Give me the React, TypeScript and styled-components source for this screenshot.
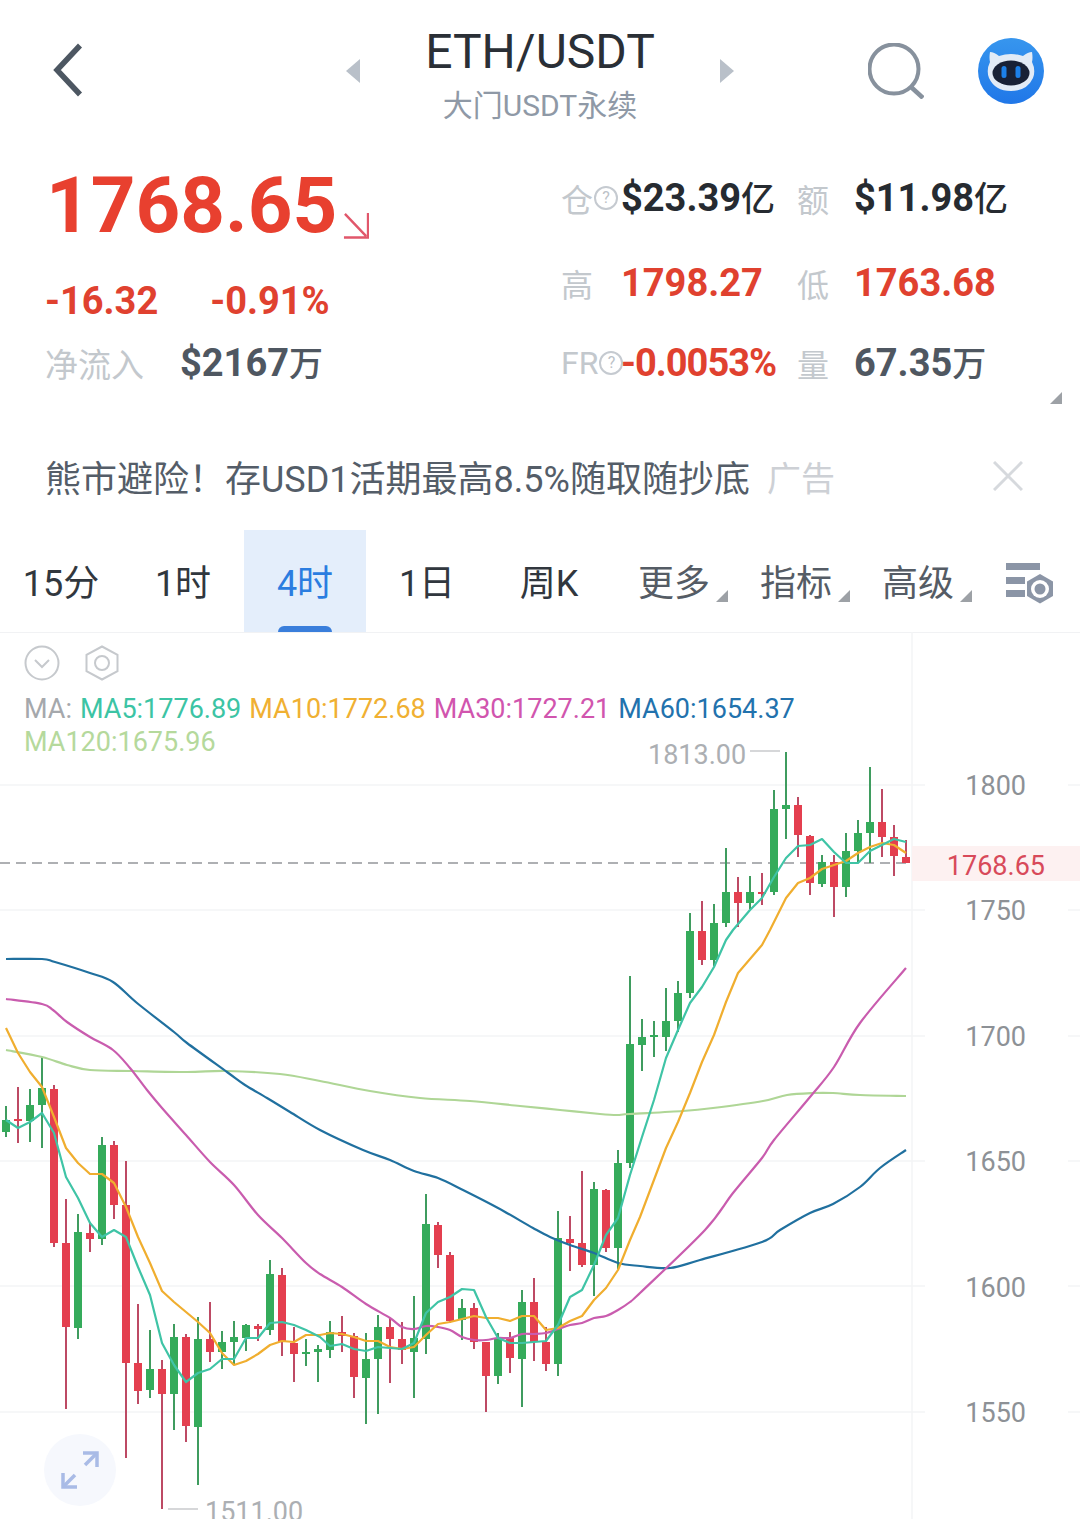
import React from 'react'
import styled, {createGlobalStyle} from 'styled-components'

const FONT = `Roboto, "Noto Sans CJK SC", "Noto Sans", sans-serif`

const GlobalStyle = createGlobalStyle`
  html, body {
    margin: 0;
    padding: 0;
    background: #fff;
  }
  body {
    width: 1080px;
    height: 1519px;
    overflow: hidden;
    font-family: ${FONT};
  }
`

const Page = styled.div`
  width: 1080px;
  height: 1519px;
  display: flex;
  flex-direction: column;
  background: #fff;
  overflow: hidden;
`

/* top bar */
const TopBar = styled.header`
  height: 142px;
  flex: none;
  display: flex;
  align-items: center;
`
const BackSlot = styled.div`
  width: 345px;
  padding-left: 52px;
  box-sizing: border-box;
  display: flex;
  align-items: center;
`
const TitleBox = styled.div`
  width: 360px;
  padding-top: 8px;
  text-align: center;
`
const Title = styled.div`
  font-size: 48px;
  line-height: 56px;
  color: #2a2f36;
`
const SubTitle = styled.div`
  font-size: 30px;
  line-height: 42px;
  color: #8f99a6;
  margin-top: 5px;
`
const SearchSlot = styled.div`
  margin-left: 133px;
  display: flex;
`
const AvatarSlot = styled.div`
  margin-left: 54px;
  display: flex;
`

/* quote */
const Quote = styled.section`
  height: 270px;
  flex: none;
  display: flex;
  position: relative;
`
const QuoteLeft = styled.div`
  width: 561px;
  flex: none;
  padding: 19px 0 0 45px;
  box-sizing: border-box;
`
const PriceRow = styled.div`
  display: flex;
  align-items: flex-start;
  height: 90px;
`
const Price = styled.div`
  font-size: 78px;
  line-height: 90px;
  font-weight: 700;
  color: #e8402f;
  margin-left: 1px;
`
const PriceArrow = styled.svg`
  margin: 51px 0 0 6px;
`
const ChangeRow = styled.div`
  display: flex;
  gap: 52px;
  margin-top: 25px;
  font-size: 38px;
  line-height: 50px;
  font-weight: 700;
  color: #e0412f;
`
const InflowRow = styled.div`
  display: flex;
  align-items: center;
  margin-top: 12px;
  height: 50px;
`
const InflowLabel = styled.span`
  width: 135px;
  font-size: 33px;
  color: #c3c8cd;
`
const QuoteGrid = styled.div`
  display: grid;
  grid-template-columns: 60px 176px 57px auto;
  grid-template-rows: 84px 86px 74px;
  align-items: center;
  padding-top: 14px;
`
const StatLabel = styled.div`
  display: flex;
  align-items: center;
  font-size: 32px;
  color: #c3c8cd;
  white-space: nowrap;
`
const HintMark = styled.span`
  width: 24px;
  height: 24px;
  flex: none;
  margin-left: 1px;
  border: 2px solid #c5cad0;
  border-radius: 50%;
  box-sizing: border-box;
  display: flex;
  align-items: center;
  justify-content: center;
  font-size: 16px;
  line-height: 1;
  color: #bcc2c8;
`
const StatValue = styled.div<{$tone: 'dark' | 'red' | 'slate', $tight?: boolean}>`
  font-size: 38px;
  line-height: 46px;
  font-weight: 700;
  white-space: nowrap;
  letter-spacing: ${p => (p.$tight ? '-1px' : '0')};
  color: ${p => (p.$tone === 'red' ? '#e0412f' : p.$tone === 'slate' ? '#4f5761' : '#262b31')};
`
const Unit = styled.span`
  font-size: 34px;
  font-weight: 500;
`
const CornerMark = styled.i<{$size: number}>`
  display: block;
  width: ${p => p.$size}px;
  height: ${p => p.$size}px;
  background: #9da1a6;
  clip-path: polygon(100% 0, 100% 100%, 0 100%);
`
const QuoteCorner = styled.div`
  position: absolute;
  right: 18px;
  bottom: 8px;
`

/* ad */
const AdBanner = styled.div`
  height: 118px;
  flex: none;
  box-sizing: border-box;
  padding: 10px 57px 0 45px;
  display: flex;
  align-items: center;
  font-size: 36px;
  color: #545d68;
`
const AdTag = styled.span`
  margin-left: 17px;
  font-size: 34px;
  color: #cdd0d5;
`
const AdClose = styled.svg`
  margin-left: auto;
`

/* tabs */
const Tabs = styled.nav`
  height: 102px;
  flex: none;
  display: flex;
`
const Tab = styled.div<{$active?: boolean}>`
  width: 122px;
  flex: none;
  position: relative;
  display: flex;
  align-items: center;
  justify-content: center;
  padding-bottom: 3px;
  box-sizing: border-box;
  font-size: 36px;
  color: ${p => (p.$active ? '#2b7de0' : '#31373e')};
  background: ${p => (p.$active ? '#e4eefb' : 'transparent')};
`
const TabBar = styled.i`
  position: absolute;
  left: 34px;
  bottom: 0;
  width: 54px;
  height: 6px;
  border-radius: 6px 6px 0 0;
  background: #3a7edb;
`
const MenuTab = styled.div`
  width: 122px;
  flex: none;
  box-sizing: border-box;
  padding: 0 0 3px 28px;
  display: flex;
  align-items: center;
  gap: 6px;
  font-size: 36px;
  color: #555c65;
`
const MenuCorner = styled.span`
  align-self: flex-end;
  margin-bottom: 27px;
`
const SettingSlot = styled.div`
  margin-left: 29px;
  padding-top: 32px;
`

/* chart */
const ChartPanel = styled.section`
  position: relative;
  flex: 1;
  overflow: hidden;
  box-shadow: inset 0 1px 0 #f1f2f4;
`
const ChartSvg = styled.svg`
  position: absolute;
  left: 0;
  top: 0;
`
const ChartHead = styled.div`
  position: relative;
  padding: 13px 0 0 24px;
`
const ChartTools = styled.div`
  display: flex;
  gap: 24px;
  height: 36px;
`
const Legend = styled.div`
  width: 860px;
  margin-top: 12px;
  font-size: 27px;
  line-height: 33px;
  color: #a5a8ac;
`
const LegendItem = styled.span<{$color: string}>`
  color: ${p => p.$color};
  margin-left: 8px;
`
const LegendWrap = styled.span<{$color: string}>`
  display: block;
  color: ${p => p.$color};
`
const ExpandButton = styled.div`
  position: absolute;
  left: 44px;
  bottom: 13px;
  width: 72px;
  height: 72px;
  border-radius: 50%;
  background: #f6f8fd;
  display: flex;
  align-items: center;
  justify-content: center;
`
const GridLine = styled.line`
  stroke: #f3f4f6;
  stroke-width: 1.5;
`
const AxisText = styled.text`
  font-family: ${FONT};
  font-size: 27px;
  fill: #8d9196;
  text-anchor: end;
`
const NowText = styled(AxisText)`
  fill: #d84a5a;
`
const MarkText = styled.text`
  font-family: ${FONT};
  font-size: 27px;
  fill: #acafb3;
`
const MarkLine = styled.line`
  stroke: #c8cacd;
  stroke-width: 1.5;
`
const NowBand = styled.rect`
  fill: #fdf1f1;
`
const NowLine = styled.line`
  stroke: #aeb0b3;
  stroke-width: 2;
  stroke-dasharray: 10 6;
`
const Wick = styled.line<{$up: boolean}>`
  stroke: ${p => (p.$up ? '#3f9c5f' : '#bd4a64')};
  stroke-width: 2;
`
const Body = styled.rect<{$up: boolean}>`
  fill: ${p => (p.$up ? '#35ab5b' : '#e43f4f')};
`
const MaLine = styled.path<{$color: string}>`
  fill: none;
  stroke: ${p => p.$color};
  stroke-width: 2.2;
  stroke-linejoin: round;
`

// g/r, wick top, wick bottom, body top, body bottom. one candle every 12px from x=6
type Candle = ['g' | 'r', number, number, number, number]
const candles: Candle[] = [
  ['g', 1106, 1137, 1120, 1132], ['r', 1087, 1143, 1119, 1121], ['g', 1089, 1142, 1105, 1121],
  ['g', 1057, 1148, 1088, 1105], ['r', 1085, 1247, 1089, 1243], ['r', 1199, 1409, 1243, 1327],
  ['g', 1214, 1339, 1232, 1328], ['r', 1222, 1252, 1233, 1239], ['g', 1137, 1245, 1145, 1239],
  ['r', 1141, 1219, 1145, 1205], ['r', 1161, 1458, 1205, 1363], ['r', 1304, 1404, 1363, 1391],
  ['g', 1330, 1398, 1369, 1390], ['r', 1360, 1509, 1369, 1394], ['g', 1324, 1430, 1337, 1394],
  ['r', 1334, 1442, 1337, 1426], ['g', 1317, 1485, 1339, 1427], ['r', 1302, 1362, 1339, 1352],
  ['g', 1331, 1369, 1342, 1352], ['g', 1321, 1365, 1337, 1342], ['g', 1324, 1351, 1325, 1338],
  ['r', 1324, 1341, 1326, 1329], ['g', 1260, 1335, 1274, 1330], ['r', 1268, 1356, 1275, 1342],
  ['r', 1327, 1382, 1343, 1354], ['g', 1339, 1366, 1352, 1354], ['g', 1345, 1382, 1349, 1352],
  ['g', 1321, 1358, 1332, 1350], ['r', 1316, 1352, 1332, 1336], ['r', 1333, 1398, 1336, 1377],
  ['g', 1333, 1424, 1359, 1378], ['g', 1315, 1414, 1327, 1359], ['r', 1318, 1383, 1327, 1339],
  ['r', 1322, 1364, 1339, 1350], ['g', 1296, 1398, 1338, 1352], ['g', 1194, 1354, 1224, 1339],
  ['r', 1222, 1268, 1225, 1255], ['r', 1252, 1323, 1255, 1321], ['g', 1299, 1340, 1308, 1320],
  ['r', 1303, 1349, 1308, 1342], ['r', 1342, 1412, 1342, 1376], ['g', 1333, 1384, 1338, 1376],
  ['r', 1332, 1373, 1338, 1358], ['g', 1290, 1407, 1302, 1359], ['r', 1278, 1361, 1302, 1342],
  ['r', 1327, 1371, 1342, 1364], ['g', 1211, 1376, 1238, 1364], ['r', 1216, 1271, 1239, 1243],
  ['r', 1171, 1267, 1243, 1265], ['g', 1182, 1296, 1189, 1265], ['r', 1189, 1252, 1190, 1248],
  ['g', 1150, 1269, 1163, 1248], ['g', 976, 1168, 1044, 1163], ['g', 1019, 1071, 1037, 1045],
  ['g', 1021, 1057, 1035, 1037], ['g', 988, 1051, 1021, 1037], ['g', 981, 1032, 993, 1021],
  ['g', 913, 998, 931, 993], ['r', 901, 965, 931, 960], ['g', 904, 966, 923, 960],
  ['g', 848, 927, 892, 923], ['r', 877, 927, 892, 903], ['g', 876, 909, 892, 903],
  ['r', 873, 905, 892, 893], ['g', 790, 895, 809, 892], ['g', 752, 839, 805, 809],
  ['r', 797, 857, 805, 835], ['r', 835, 895, 836, 883], ['g', 855, 887, 862, 884],
  ['r', 855, 917, 862, 887], ['g', 833, 897, 851, 887], ['g', 820, 863, 833, 851],
  ['g', 767, 863, 822, 833], ['r', 789, 857, 822, 837], ['r', 825, 876, 837, 856],
  ['r', 840, 863, 857, 863],
]

const ma5 = `6,1120 18,1128 30,1122 42,1113 54,1133 66,1177 78,1198 90,1223 102,1237 114,1230 126,1237 138,1267 150,1295 162,1343 174,1365 186,1382 198,1373 210,1369 222,1359 234,1359 246,1338 258,1338 270,1323 282,1322 294,1325 306,1330 320,1337 330,1346 342,1344 354,1349 366,1351 378,1347 390,1348 402,1349 414,1343 426,1313 438,1302 450,1297 462,1289 474,1290 486,1317 498,1338 510,1343 522,1343 534,1342 546,1341 558,1325 570,1297 582,1290 594,1265 606,1235 618,1218 630,1175 642,1137 654,1100 666,1058 678,1030 690,1003 702,987 714,967 726,940 733,930 750,910 762,898 774,877 786,858 798,846 810,845 822,839 834,852 846,863 858,863 870,851 882,845 894,839 906,842`
const ma10 = `6,1028 18,1053 30,1072 42,1087 54,1117 66,1148 78,1163 90,1174 102,1174 114,1183 126,1207 138,1237 150,1263 162,1291 174,1302 186,1312 198,1322 210,1333 222,1353 234,1365 246,1361 258,1354 270,1345 282,1341 294,1342 306,1335 320,1335 330,1333 342,1334 354,1337 366,1341 378,1341 390,1347 402,1349 414,1347 426,1335 438,1324 450,1322 462,1319 474,1316 486,1318 498,1318 510,1321 522,1316 534,1316 546,1330 558,1328 570,1321 582,1316 594,1300 606,1288 618,1270 630,1240 640,1217 666,1148 678,1122 690,1093 702,1062 714,1035 726,1002 738,973 762,945 770,930 786,898 798,883 810,878 822,869 834,865 846,861 858,853 870,847 882,843 894,845 906,853`
const ma30 = `6,999 42,1004 53,1010 67,1022 90,1037 113,1050 130,1068 147,1090 162,1108 186,1135 210,1162 234,1185 258,1215 282,1238 306,1263 320,1274 342,1287 366,1304 390,1318 402,1327 414,1329 426,1326 438,1327 450,1330 462,1337 474,1340 486,1340 498,1338 510,1338 522,1334 534,1334 546,1333 558,1329 570,1325 582,1323 594,1318 606,1316 618,1310 630,1302 640,1293 705,1230 733,1193 762,1158 774,1140 810,1097 834,1067 860,1023 906,968`
const ma60 = `6,959 42,959 55,962 90,973 113,982 137,1003 174,1032 187,1043 227,1072 245,1085 267,1098 290,1112 320,1130 363,1150 390,1160 414,1171 438,1178 463,1190 498,1208 533,1228 550,1237 570,1245 594,1253 618,1263 640,1266 670,1268 700,1260 762,1242 780,1230 810,1213 833,1204 860,1187 880,1168 906,1150`
const ma120 = `6,1050 42,1057 67,1065 90,1070 133,1071 187,1072 227,1071 280,1074 320,1081 370,1091 420,1098 470,1101 520,1106 560,1110 600,1114 617,1115 630,1114 683,1111 713,1108 763,1101 787,1095 813,1093 833,1093 860,1095 906,1096`

// straight segments for the short averages, catmull-rom for the slow ones
function toPath(points: string, smooth = false) {
  const p = points.split(' ').map(s => s.split(',').map(Number))
  if (!smooth) return 'M' + p.map(q => q.join(' ')).join(' L')
  let d = `M${p[0][0]} ${p[0][1]}`
  for (let i = 0; i < p.length - 1; i++) {
    const a = p[Math.max(i - 1, 0)]
    const b = p[i]
    const c = p[i + 1]
    const e = p[Math.min(i + 2, p.length - 1)]
    const c1 = [b[0] + (c[0] - a[0]) / 6, b[1] + (c[1] - a[1]) / 6]
    const c2 = [c[0] - (e[0] - b[0]) / 6, c[1] - (e[1] - b[1]) / 6]
    d += ` C${c1[0]} ${c1[1]} ${c2[0]} ${c2[1]} ${c[0]} ${c[1]}`
  }
  return d
}

const gridRows = [785, 910, 1036, 1161, 1286, 1412]
const axisLabels = [
  ['1800', 795],
  ['1750', 920],
  ['1700', 1046],
  ['1650', 1171],
  ['1600', 1297],
  ['1550', 1422],
] as const

function Chart() {
  return (
    <ChartSvg width={1080} height={887} viewBox="0 632 1080 887">
      {gridRows.map(y => (
        <g key={y}>
          <GridLine x1={0} y1={y} x2={925} y2={y}/>
          <GridLine x1={1068} y1={y} x2={1080} y2={y}/>
        </g>
      ))}
      <GridLine x1={912} y1={632} x2={912} y2={1519}/>
      <NowBand x={912} y={846} width={168} height={35}/>
      <NowLine x1={0} y1={863} x2={912} y2={863}/>
      {candles.map(([kind, top, bottom, bodyTop, bodyBottom], i) => {
        const x = 6 + i * 12
        const up = kind === 'g'
        return (
          <g key={i}>
            <Wick $up={up} x1={x} y1={top} x2={x} y2={bottom}/>
            <Body $up={up} x={x - 4} y={bodyTop} width={8} height={Math.max(bodyBottom - bodyTop, 2)}/>
          </g>
        )
      })}
      <MaLine $color="#afd696" d={toPath(ma120, true)}/>
      <MaLine $color="#20709f" d={toPath(ma60, true)}/>
      <MaLine $color="#c95cae" d={toPath(ma30, true)}/>
      <MaLine $color="#f0ae2f" d={toPath(ma10)}/>
      <MaLine $color="#3fc4a6" d={toPath(ma5)}/>
      {axisLabels.map(([text, y]) => (
        <AxisText key={text} x={1026} y={y}>{text}</AxisText>
      ))}
      <NowText x={1045} y={875}>1768.65</NowText>
      <MarkText x={648} y={764}>1813.00</MarkText>
      <MarkLine x1={750} y1={751} x2={780} y2={751}/>
      <MarkLine x1={168} y1={1509} x2={198} y2={1509}/>
      <MarkText x={205} y={1521}>1511.00</MarkText>
    </ChartSvg>
  )
}

function BackIcon() {
  return (
    <svg width={32} height={56} viewBox="0 0 32 56">
      <path d="M28 2.5 L5 27 L28 51.5" fill="none" stroke="#4d5762" strokeWidth={5.5}/>
    </svg>
  )
}

function SideArrow({dir}: {dir: 'left' | 'right'}) {
  return (
    <svg width={15} height={24} viewBox="0 0 15 24">
      <path d={dir === 'left' ? 'M15 0 V24 L1 12 Z' : 'M0 0 V24 L14 12 Z'} fill="#b9c0c9"/>
    </svg>
  )
}

function SearchIcon() {
  return (
    <svg width={56} height={56} viewBox="0 0 56 56">
      <circle cx={26} cy={26} r={24.5} fill="none" stroke="#87919d" strokeWidth={4}/>
      <path d="M43 44 L55 55" fill="none" stroke="#87919d" strokeWidth={4.5}/>
    </svg>
  )
}

function Avatar() {
  return (
    <svg width={66} height={66} viewBox="0 0 66 66">
      <defs>
        <linearGradient id="avatarBg" x1="0" y1="0" x2="0" y2="1">
          <stop offset="0" stopColor="#3796ee"/>
          <stop offset="1" stopColor="#2077e8"/>
        </linearGradient>
      </defs>
      <circle cx={33} cy={33} r={33} fill="url(#avatarBg)"/>
      <path d="M12 14 Q16 14 21 18 Q33 14 45 18 Q50 14 54 14 Q55 20 54 24 Q58 32 55 40 Q49 53 33 53 Q17 53 11 40 Q8 32 12 24 Q11 20 12 14 Z" fill="#e2ebf6"/>
      <ellipse cx={33} cy={35} rx={18.5} ry={12.5} fill="#182136"/>
      <rect x={23.5} y={28} width={5} height={12} rx={2.5} fill="#1c80e8"/>
      <rect x={37.5} y={28} width={5} height={12} rx={2.5} fill="#1c80e8"/>
    </svg>
  )
}

function SettingIcon() {
  return (
    <svg width={50} height={42} viewBox="0 0 50 42">
      <rect x={1} y={1} width={34} height={7} fill="#8b95a6"/>
      <rect x={1} y={15} width={19} height={7} fill="#8b95a6"/>
      <rect x={1} y={28} width={19} height={7} fill="#8b95a6"/>
      <path d="M35 12 L48 19.5 V34 L35 41.5 L22 34 V19.5 Z" fill="#8b95a6"/>
      <circle cx={35} cy={27} r={9} fill="#fff"/>
      <circle cx={35} cy={27} r={5.5} fill="#8b95a6"/>
    </svg>
  )
}

function FoldIcon() {
  return (
    <svg width={36} height={36} viewBox="0 0 36 36">
      <circle cx={18} cy={18} r={16.5} fill="none" stroke="#c6c9cd" strokeWidth={2}/>
      <path d="M11 15 L18 22 L25 15" fill="none" stroke="#c6c9cd" strokeWidth={2}/>
    </svg>
  )
}

function HexIcon() {
  return (
    <svg width={36} height={36} viewBox="0 0 36 36">
      <path d="M18 1.5 L33.5 9.8 V26.2 L18 34.5 L2.5 26.2 V9.8 Z" fill="none" stroke="#c6c9cd" strokeWidth={2}/>
      <circle cx={18} cy={18} r={7} fill="none" stroke="#c6c9cd" strokeWidth={2}/>
    </svg>
  )
}

function ExpandIcon() {
  return (
    <svg width={40} height={38} viewBox="0 0 40 38">
      <g fill="none" stroke="#a9bbe6" strokeWidth={3.5}>
        <path d="M23 2 H37 V16"/>
        <path d="M37 2 L25 14"/>
        <path d="M3 22 V36 H17"/>
        <path d="M3 36 L15 24"/>
      </g>
    </svg>
  )
}

const labels: {text: string, hint?: boolean}[] = [
  {text: '仓', hint: true},
  {text: '额'},
  {text: '高'},
  {text: '低'},
  {text: 'FR', hint: true},
  {text: '量'},
]

function StatName({index}: {index: number}) {
  const item = labels[index]
  return (
    <StatLabel>
      {item.text}
      {item.hint && <HintMark>?</HintMark>}
    </StatLabel>
  )
}

export default function App() {
  return (
    <Page>
      <GlobalStyle/>
      <TopBar>
        <BackSlot><BackIcon/></BackSlot>
        <SideArrow dir="left"/>
        <TitleBox>
          <Title>ETH/USDT</Title>
          <SubTitle>大门USDT永续</SubTitle>
        </TitleBox>
        <SideArrow dir="right"/>
        <SearchSlot><SearchIcon/></SearchSlot>
        <AvatarSlot><Avatar/></AvatarSlot>
      </TopBar>

      <Quote>
        <QuoteLeft>
          <PriceRow>
            <Price>1768.65</Price>
            <PriceArrow width={26} height={27} viewBox="0 0 27 28">
              <path d="M2 2 L24 25 M26 1 V26.5 H1" fill="none" stroke="#e1576b" strokeWidth={2.5}/>
            </PriceArrow>
          </PriceRow>
          <ChangeRow>
            <span>-16.32</span>
            <span>-0.91%</span>
          </ChangeRow>
          <InflowRow>
            <InflowLabel>净流入</InflowLabel>
            <StatValue $tone="slate">$2167<Unit>万</Unit></StatValue>
          </InflowRow>
        </QuoteLeft>
        <QuoteGrid>
          <StatName index={0}/>
          <StatValue $tone="dark">$23.39<Unit>亿</Unit></StatValue>
          <StatName index={1}/>
          <StatValue $tone="dark">$11.98<Unit>亿</Unit></StatValue>
          <StatName index={2}/>
          <StatValue $tone="red">1798.27</StatValue>
          <StatName index={3}/>
          <StatValue $tone="red">1763.68</StatValue>
          <StatName index={4}/>
          <StatValue $tone="red" $tight>-0.0053%</StatValue>
          <StatName index={5}/>
          <StatValue $tone="slate">67.35<Unit>万</Unit></StatValue>
        </QuoteGrid>
        <QuoteCorner><CornerMark $size={12}/></QuoteCorner>
      </Quote>

      <AdBanner>
        <span>熊市避险！存USD1活期最高8.5%随取随抄底</span>
        <AdTag>广告</AdTag>
        <AdClose width={30} height={30} viewBox="0 0 30 30">
          <path d="M1 1 L29 29 M29 1 L1 29" fill="none" stroke="#d6d9dd" strokeWidth={3}/>
        </AdClose>
      </AdBanner>

      <Tabs>
        <Tab>15分</Tab>
        <Tab>1时</Tab>
        <Tab $active>4时<TabBar/></Tab>
        <Tab>1日</Tab>
        <Tab>周K</Tab>
        <MenuTab>更多<MenuCorner><CornerMark $size={12}/></MenuCorner></MenuTab>
        <MenuTab>指标<MenuCorner><CornerMark $size={12}/></MenuCorner></MenuTab>
        <MenuTab>高级<MenuCorner><CornerMark $size={12}/></MenuCorner></MenuTab>
        <SettingSlot><SettingIcon/></SettingSlot>
      </Tabs>

      <ChartPanel>
        <Chart/>
        <ChartHead>
          <ChartTools>
            <FoldIcon/>
            <HexIcon/>
          </ChartTools>
          <Legend>
            MA:
            <LegendItem $color="#3cc4a4">MA5:1776.89</LegendItem>
            <LegendItem $color="#f0b032">MA10:1772.68</LegendItem>
            <LegendItem $color="#d155ae">MA30:1727.21</LegendItem>
            <LegendItem $color="#2272ad">MA60:1654.37</LegendItem>
            <LegendWrap $color="#b5d99c">MA120:1675.96</LegendWrap>
          </Legend>
        </ChartHead>
        <ExpandButton><ExpandIcon/></ExpandButton>
      </ChartPanel>
    </Page>
  )
}
